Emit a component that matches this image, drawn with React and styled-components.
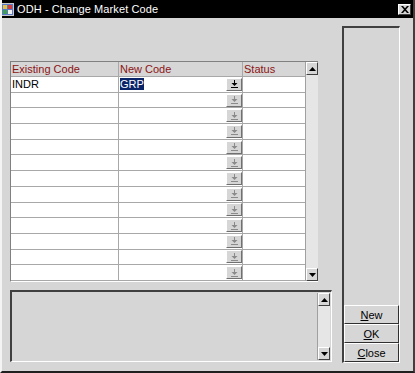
import React from 'react'
import styled, { createGlobalStyle } from 'styled-components'

const GlobalStyle = createGlobalStyle`
  html, body {
    margin: 0;
    padding: 0;
    background: #d6d6d6;
  }
  body {
    font-family: "Liberation Sans", Arial, sans-serif;
    font-size: 11px;
  }
`

const rows = [
  { existing: 'INDR', code: 'GRP', status: '' },
  ...Array.from({ length: 12 }, () => ({ existing: '', code: '', status: '' })),
]

function App() {
  return (
    <>
      <GlobalStyle />
      <Window>
        <TitleBar>
          <AppIcon />
          <Title>ODH - Change Market Code</Title>
          <CloseBox>
            <svg width="8" height="7" viewBox="0 0 8 7">
              <path d="M0 0h2l2 2.2L6 0h2L5 3.5 8 7H6L4 4.8 2 7H0l3-3.5z" fill="#000" />
            </svg>
          </CloseBox>
        </TitleBar>
        <Content>
          <LeftCol>
            <Grid>
              <GridBody>
                <HeadCell>Existing Code</HeadCell>
                <HeadCell>New Code</HeadCell>
                <HeadCell last>Status</HeadCell>
                {rows.map((row, i) => (
                  <React.Fragment key={i}>
                    <Cell>{row.existing}</Cell>
                    <Cell>
                      <CodeText>{row.code && <Selected>{row.code}</Selected>}</CodeText>
                      <DropButton>
                        <DropIcon active={i === 0} />
                      </DropButton>
                    </Cell>
                    <Cell last>{row.status}</Cell>
                  </React.Fragment>
                ))}
              </GridBody>
              <ScrollBar>
                <ArrowButton>
                  <Arrow up />
                </ArrowButton>
                <Track />
                <ArrowButton>
                  <Arrow />
                </ArrowButton>
              </ScrollBar>
            </Grid>
            <Memo>
              <MemoText />
              <ScrollBar>
                <ArrowButton>
                  <Arrow up />
                </ArrowButton>
                <Track />
                <ArrowButton>
                  <Arrow />
                </ArrowButton>
              </ScrollBar>
            </Memo>
          </LeftCol>
          <RightPanel>
            <ActionButton>
              <u>N</u>ew
            </ActionButton>
            <ActionButton>
              <u>O</u>K
            </ActionButton>
            <ActionButton>
              <u>C</u>lose
            </ActionButton>
          </RightPanel>
        </Content>
      </Window>
    </>
  )
}

function AppIcon() {
  return (
    <svg width="13" height="13" viewBox="0 0 13 13">
      <rect x="0.5" y="0.5" width="12" height="12" fill="#5a78c8" stroke="#c8c8c8" />
      <rect x="2" y="2" width="4" height="4" fill="#e8c040" />
      <rect x="7" y="2" width="4" height="4" fill="#d04040" />
      <rect x="2" y="7" width="4" height="4" fill="#40a050" />
      <rect x="7" y="7" width="4" height="4" fill="#f0f0f0" />
    </svg>
  )
}

function DropIcon({ active }) {
  const c = active ? '#000' : '#8a8a8a'
  return (
    <svg width="7" height="8" viewBox="0 0 7 8">
      <rect x="3" y="0" width="1" height="3" fill={c} />
      <path d="M0.5 3h6L3.5 6z" fill={c} />
      <rect x="0" y="7" width="7" height="1" fill={c} />
    </svg>
  )
}

function Arrow({ up }) {
  return (
    <svg width="7" height="4" viewBox="0 0 7 4">
      <path d={up ? 'M0 4h7L3.5 0z' : 'M0 0h7L3.5 4z'} fill="#000" />
    </svg>
  )
}

const Window = styled.div`
  box-sizing: border-box;
  width: 415px;
  height: 373px;
  display: flex;
  flex-direction: column;
  background: #d6d6d6;
  border-left: 2px solid #f4f4f4;
  border-right: 2px solid #404040;
  border-bottom: 2px solid #202020;
  overflow: hidden;
`

const TitleBar = styled.div`
  height: 18px;
  flex: none;
  background: #000;
  display: flex;
  align-items: center;
  padding: 0 2px 0 1px;
  margin-left: -2px;
  margin-right: -2px;
  gap: 3px;
`

const Title = styled.div`
  flex: 1;
  color: #fff;
  font-size: 11px;
  letter-spacing: 0.1px;
`

const CloseBox = styled.div`
  box-sizing: border-box;
  width: 13px;
  height: 11px;
  margin-right: 2px;
  background: #d6d6d6;
  border: 1px solid;
  border-color: #fff #404040 #404040 #fff;
  display: flex;
  align-items: center;
  justify-content: center;
`

const Content = styled.div`
  flex: 1;
  display: flex;
  padding: 8px 13px 8px 8px;
  gap: 10px;
`

const LeftCol = styled.div`
  flex: 1;
  display: flex;
  flex-direction: column;
  justify-content: flex-end;
  gap: 8px;
  padding-bottom: 1px;
`

const Grid = styled.div`
  box-sizing: border-box;
  height: 221px;
  width: 308px;
  display: flex;
  background: #d6d6d6;
  border-top: 1px solid #808080;
  border-left: 1px solid #808080;
  border-bottom: 1px solid #fff;
`

const GridBody = styled.div`
  flex: 1;
  display: grid;
  grid-template-columns: 108px 124px 1fr;
  grid-template-rows: 15px repeat(13, 1fr);
`

const HeadCell = styled.div`
  color: #8c1414;
  padding: 1px 0 0 1px;
  border-right: ${({ last }) => (last ? 'none' : '1px solid #a8a8a8')};
  border-bottom: 1px solid #a8a8a8;
  white-space: nowrap;
`

const Cell = styled.div`
  background: #fff;
  display: flex;
  align-items: center;
  padding-left: 1px;
  border-right: ${({ last }) => (last ? 'none' : '1px solid #a8a8a8')};
  border-bottom: 1px solid #a8a8a8;
  color: #000;
`

const CodeText = styled.div`
  flex: 1;
`

const Selected = styled.span`
  background: #0a246a;
  color: #fff;
`

const DropButton = styled.div`
  box-sizing: border-box;
  width: 16px;
  height: 13px;
  background: #d6d6d6;
  border: 1px solid;
  border-color: #fff #707070 #707070 #fff;
  display: flex;
  align-items: center;
  justify-content: center;
`

const ScrollBar = styled.div`
  width: 12px;
  flex: none;
  display: flex;
  flex-direction: column;
  background: #e6e6e6;
  border-left: 1px solid #a0a0a0;
`

const ArrowButton = styled.div`
  box-sizing: border-box;
  height: 13px;
  flex: none;
  background: #d6d6d6;
  border: 1px solid;
  border-color: #fff #404040 #404040 #fff;
  display: flex;
  align-items: center;
  justify-content: center;
`

const Track = styled.div`
  flex: 1;
`

const Memo = styled.div`
  box-sizing: border-box;
  height: 72px;
  display: flex;
  border-top: 2px solid #404040;
  border-left: 2px solid #404040;
  border-bottom: 1px solid #fff;
  border-right: 1px solid #fff;
  padding: 1px 1px 1px 0;
`

const MemoText = styled.div`
  flex: 1;
  background: #d6d6d6;
`

const RightPanel = styled.div`
  box-sizing: border-box;
  width: 58px;
  display: flex;
  flex-direction: column;
  justify-content: flex-end;
  border-top: 2px solid #404040;
  border-left: 2px solid #404040;
  border-right: 1px solid #fff;
  border-bottom: 1px solid #fff;
  padding: 0 0 0 0;
`

const ActionButton = styled.div`
  box-sizing: border-box;
  height: 19px;
  display: flex;
  align-items: center;
  justify-content: center;
  background: #d6d6d6;
  border: 1px solid;
  border-color: #fff #303030 #303030 #fff;
  color: #000;
  font-size: 11px;
`

export default App
